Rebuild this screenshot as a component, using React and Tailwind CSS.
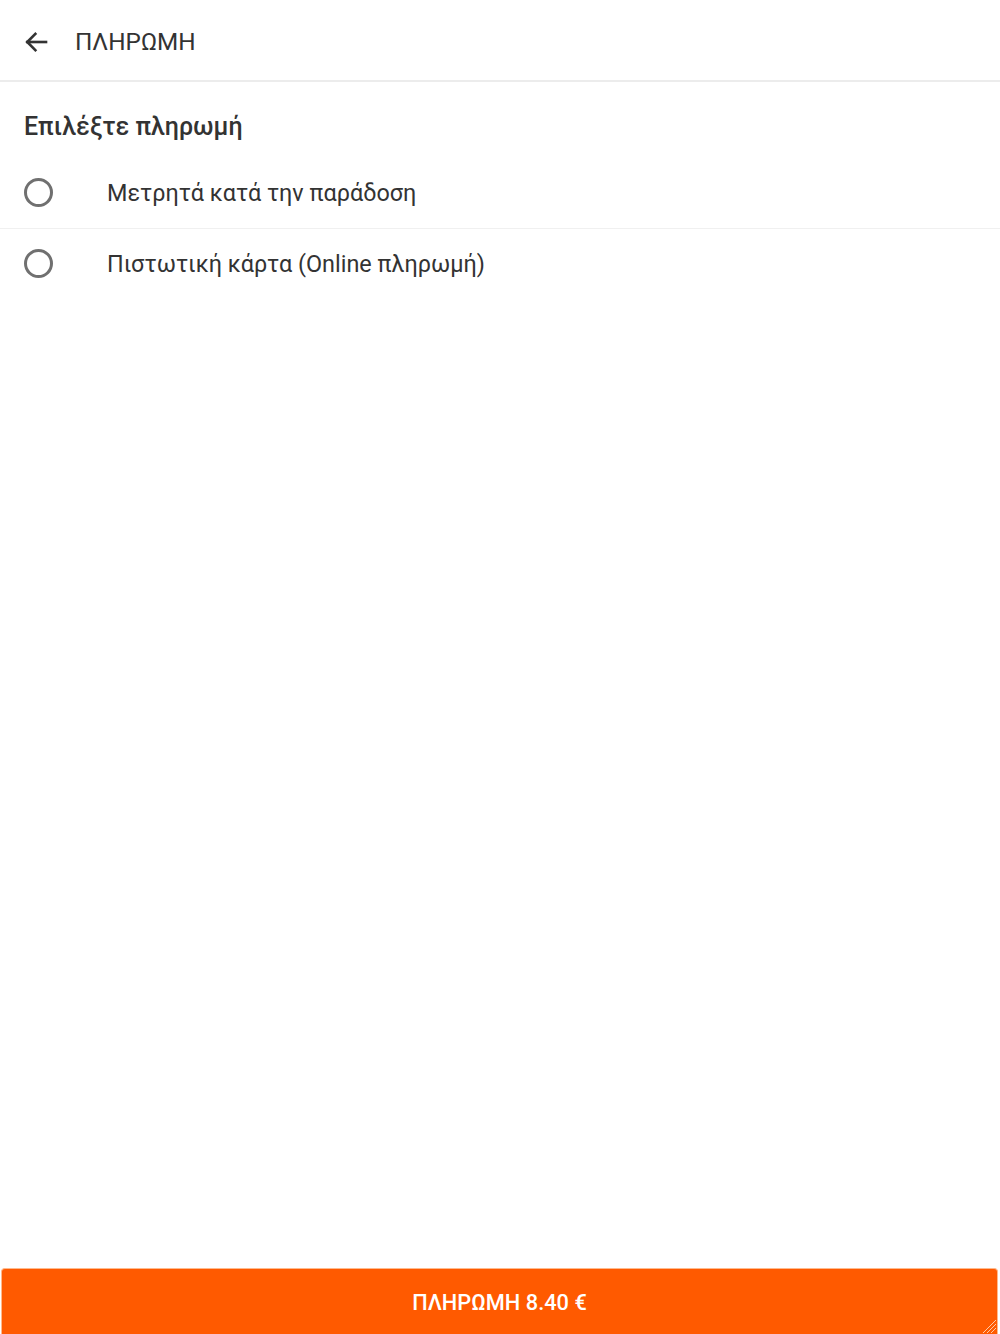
import React from "react";

export default function App() {
  return (
    <div className="flex h-[1334px] w-full flex-col bg-white text-[#333333]" style={{ fontFamily: "Roboto, 'Noto Sans', sans-serif" }}>
      <header className="flex h-[82px] shrink-0 items-center border-b-2 border-[#ececec] pt-[4px]">
        <div className="flex w-[75px] items-center pl-[21px]">
          <svg width="30" height="30" viewBox="0 0 24 24" fill="none" stroke="#333333" strokeWidth="2.1" strokeLinecap="square">
            <path d="M20 12H5" />
            <path d="M11.5 5.5L5 12l6.5 6.5" />
          </svg>
        </div>
        <h1 className="text-[24.3px] leading-[30px] font-normal text-[#333333]">ΠΛΗΡΩΜΗ</h1>
      </header>

      <main className="flex flex-col">
        <h2 className="px-[24px] pt-[29px] pb-[13px] text-[25px] leading-[32px] font-medium text-[#333333]">Επιλέξτε πληρωμή</h2>

        <label className="flex h-[73px] items-center border-b border-[#f0f0f0] pt-[2px] pl-[24px]">
          <span className="box-border h-[29px] w-[29px] -translate-y-[1px] rounded-full border-[3px] border-[#707070]"></span>
          <span className="ml-[54px] text-[23.4px] leading-[30px] text-[#333333]">Μετρητά κατά την παράδοση</span>
        </label>
        <label className="flex h-[70px] items-center pl-[24px]">
          <span className="box-border h-[29px] w-[29px] -translate-y-[1px] rounded-full border-[3px] border-[#707070]"></span>
          <span className="ml-[54px] text-[23.4px] leading-[30px] text-[#333333]">Πιστωτική κάρτα (Online πληρωμή)</span>
        </label>
      </main>

      <div className="mt-auto px-[1px]">
        <button className="relative flex h-[66px] w-[997px] items-center justify-center rounded-t-[4px] border border-b-0 border-[#ffb98c] bg-[#ff5a00] pt-[4px] text-[21.8px] font-medium text-white">
          ΠΛΗΡΩΜΗ 8.40 €
          <svg className="absolute right-[1px] bottom-[1px]" width="14" height="14" viewBox="0 0 14 14" stroke="#ffc9a8" strokeWidth="1">
            <path d="M14 1L1 14" />
            <path d="M14 5L5 14" />
            <path d="M14 9L9 14" />
          </svg>
        </button>
      </div>
    </div>
  );
}
